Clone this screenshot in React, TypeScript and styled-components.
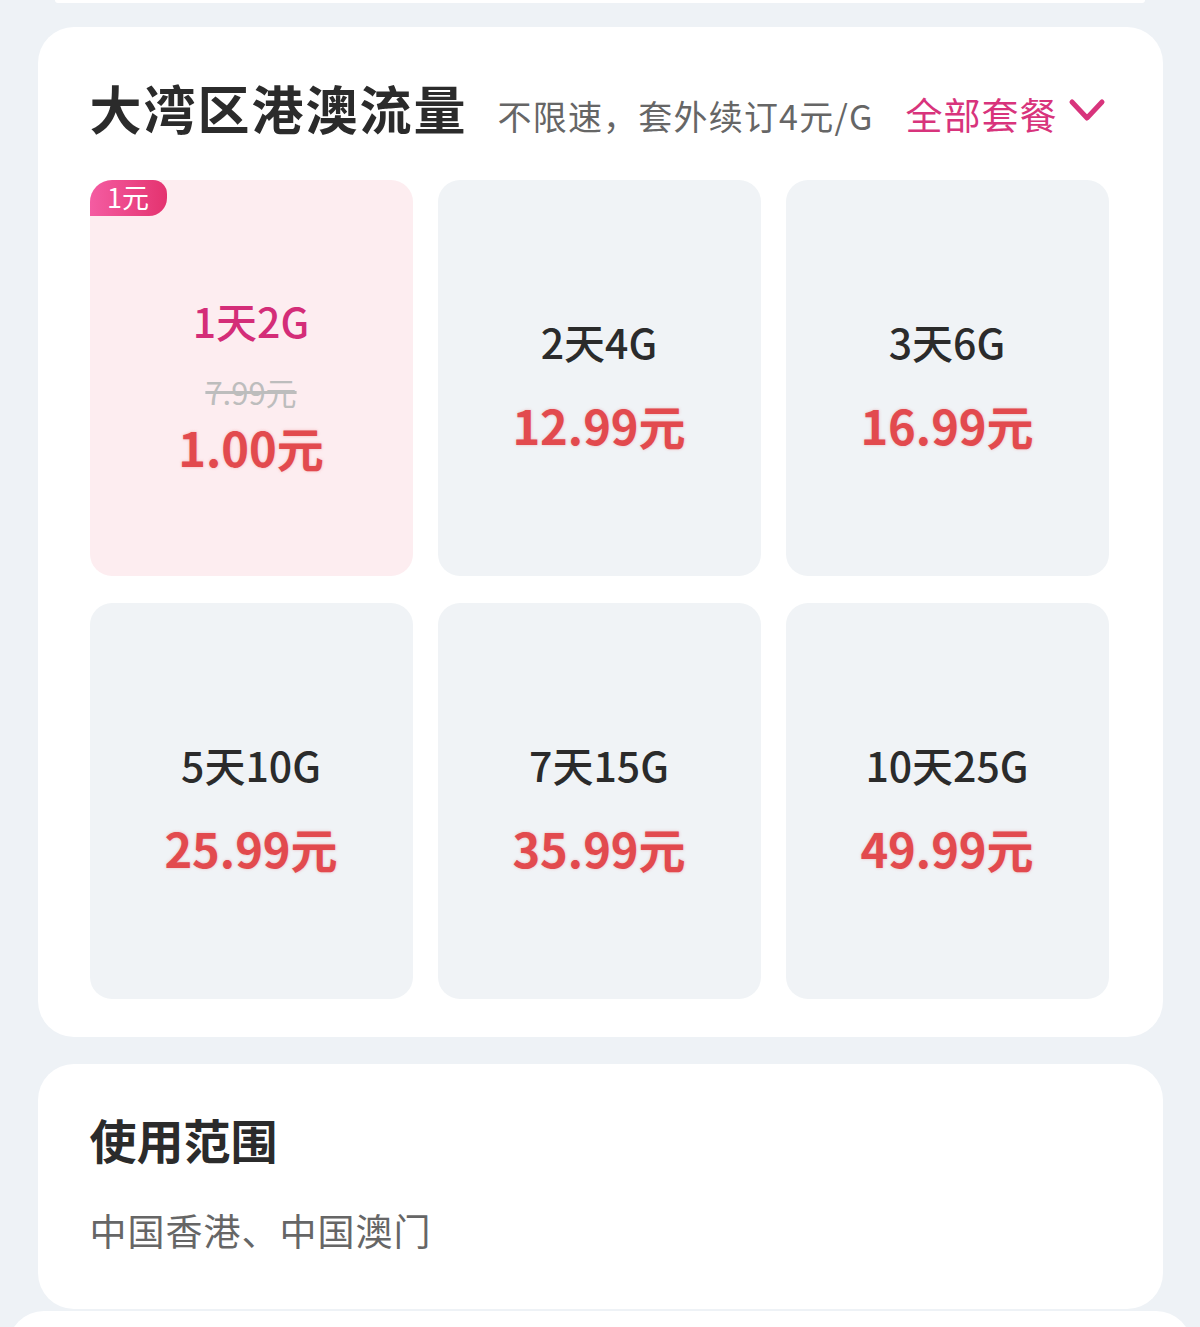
import React from "react";
import styled, { createGlobalStyle } from "styled-components";

const GlobalStyle = createGlobalStyle`
  html, body {
    margin: 0;
    padding: 0;
    background: #eef2f6;
    font-family: "Noto Sans CJK SC", "Noto Sans", sans-serif;
  }
`;

const Page = styled.div`
  display: flex;
  flex-direction: column;
  align-items: center;
  min-height: 1327px;
  overflow: hidden;
`;

const TopEdge = styled.div`
  width: 1090px;
  height: 3px;
  background: #fff;
  border-radius: 0 0 6px 6px;
  margin-bottom: 24px;
`;

const Card = styled.section<{ $gap?: number }>`
  box-sizing: border-box;
  width: 1125px;
  background: #fff;
  border-radius: 36px;
  padding: 51px 53px 38px 52px;
  margin-bottom: ${(p) => p.$gap ?? 27}px;
`;

const TitleRow = styled.div`
  display: flex;
  align-items: baseline;
  height: 60px;
  margin-bottom: 42px;
  white-space: nowrap;
  & > * {
    flex-shrink: 0;
  }
`;

const Title = styled.h2`
  margin: 0;
  font-size: 52px;
  line-height: 60px;
  letter-spacing: 2px;
  font-weight: 700;
  color: #2b2b2b;
`;

const Subtitle = styled.span`
  margin-left: 30px;
  font-size: 34px;
  letter-spacing: 1.2px;
  color: #666;
`;

const MoreLink = styled.a`
  margin-left: 32px;
  display: flex;
  align-items: center;
  gap: 10px;
  font-size: 37px;
  letter-spacing: 1px;
  color: #d8347c;
  text-decoration: none;
  cursor: pointer;
  & > svg {
    align-self: center;
    margin-top: -8px;
  }
`;

const Grid = styled.div`
  display: grid;
  grid-template-columns: repeat(3, 323px);
  grid-auto-rows: 396px;
  column-gap: 25px;
  row-gap: 27px;
`;

const Plan = styled.div<{ $active?: boolean }>`
  position: relative;
  display: flex;
  flex-direction: column;
  align-items: center;
  justify-content: center;
  padding-top: 10px;
  box-sizing: border-box;
  border-radius: 22px;
  background: ${(p) => (p.$active ? "#fdedf0" : "#f0f3f6")};
`;

const Badge = styled.span`
  position: absolute;
  top: 0;
  left: 0;
  width: 77px;
  height: 36px;
  padding-bottom: 4px;
  box-sizing: border-box;
  display: flex;
  align-items: center;
  justify-content: center;
  border-radius: 22px 14px 18px 0;
  background: linear-gradient(90deg, #f45ca2, #e4336f);
  color: #fff;
  font-size: 27px;
  line-height: 1;
`;

const PlanName = styled.div<{ $active?: boolean }>`
  font-size: 41px;
  line-height: 56px;
  font-weight: 500;
  color: ${(p) => (p.$active ? "#d42d78" : "#2b2b2b")};
`;

const OldPrice = styled.div`
  margin-top: 24px;
  font-size: 31px;
  line-height: 40px;
  color: #bdbdbd;
  text-decoration: line-through;
`;

const Price = styled.div<{ $tight?: boolean }>`
  margin-top: ${(p) => (p.$tight ? 7 : 28)}px;
  font-size: 47px;
  line-height: 56px;
  font-weight: 700;
  color: #e24a4e;
  text-shadow: 0 0 3px rgba(226, 74, 78, 0.35);
`;

const SectionTitle = styled.h3`
  margin: -4px 0 0;
  font-size: 47px;
  line-height: 56px;
  font-weight: 700;
  color: #2b2b2b;
`;

const SectionText = styled.p`
  margin: 38px 0 16px;
  font-size: 37px;
  line-height: 50px;
  letter-spacing: 1px;
  color: #666;
`;

const BottomEdge = styled.div`
  width: 1184px;
  height: 40px;
  background: #fff;
  border-radius: 36px 36px 0 0;
  margin-top: 2px;
`;

type PlanData = { name: string; price: string; old?: string; badge?: string };

const plans: PlanData[] = [
  { name: "1天2G", price: "1.00元", old: "7.99元", badge: "1元" },
  { name: "2天4G", price: "12.99元" },
  { name: "3天6G", price: "16.99元" },
  { name: "5天10G", price: "25.99元" },
  { name: "7天15G", price: "35.99元" },
  { name: "10天25G", price: "49.99元" },
];

function ChevronDown() {
  return (
    <svg width="38" height="28" viewBox="0 0 38 28" fill="none">
      <path d="M4 6 L19 22 L34 6" stroke="#d8347c" strokeWidth="5" strokeLinecap="round" strokeLinejoin="round" />
    </svg>
  );
}

export default function App() {
  return (
    <Page>
      <GlobalStyle />
      <TopEdge />
      <Card>
        <TitleRow>
          <Title>大湾区港澳流量</Title>
          <Subtitle>不限速，套外续订4元/G</Subtitle>
          <MoreLink>
            全部套餐
            <ChevronDown />
          </MoreLink>
        </TitleRow>
        <Grid>
          {plans.map((p) => {
            const active = !!p.badge;
            return (
              <Plan key={p.name} $active={active}>
                {p.badge && <Badge>{p.badge}</Badge>}
                <PlanName $active={active}>{p.name}</PlanName>
                {p.old && <OldPrice>{p.old}</OldPrice>}
                <Price $tight={!!p.old}>{p.price}</Price>
              </Plan>
            );
          })}
        </Grid>
      </Card>
      <Card $gap={0}>
        <SectionTitle>使用范围</SectionTitle>
        <SectionText>中国香港、中国澳门</SectionText>
      </Card>
      <BottomEdge />
    </Page>
  );
}
